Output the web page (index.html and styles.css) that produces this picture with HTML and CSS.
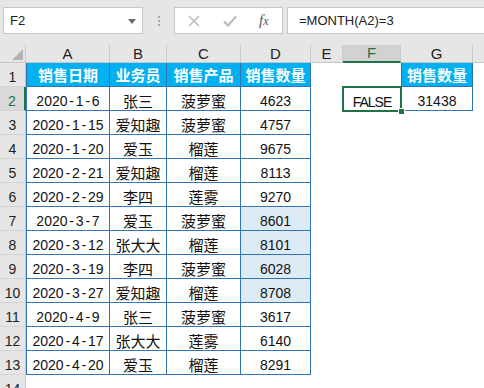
FILE: index.html
```html
<!DOCTYPE html>
<html lang="zh">
<head>
<meta charset="utf-8">
<title>Excel</title>
<link rel="stylesheet" href="styles.css">
</head>
<body>
<div class="toolbar">
  <div class="namebox"><span class="nb-text">F2</span><span class="caret"></span></div>
  <div class="dots"><i></i><i></i><i></i></div>
  <div class="btnbox">
    <svg class="ic-x" width="12" height="12" viewBox="0 0 12 12"><path d="M1 1L11 11M11 1L1 11" stroke="#bcbcbc" stroke-width="1.6" fill="none"/></svg>
    <svg class="ic-ok" width="14" height="12" viewBox="0 0 14 12"><path d="M1 6.5L5 10.5L13 1.5" stroke="#bcbcbc" stroke-width="2.2" fill="none"/></svg>
    <span class="fx">f<span class="fx-x">x</span></span>
  </div>
  <div class="formula">=MONTH(A2)=3</div>
</div>
<div class="sheet">
  <div class="corner"><div class="tri"></div></div>
  <div class="ch">A</div><div class="ch">B</div><div class="ch">C</div><div class="ch">D</div><div class="ch">E</div><div class="ch ch-act">F</div><div class="ch">G</div><div class="ch ch-last"></div>

  <div class="rh">1</div>
  <div class="c t tl hd cjk">销售日期</div><div class="c t hd cjk">业务员</div><div class="c t hd cjk">销售产品</div><div class="c t hd cjk">销售数量</div>
  <div class="c"></div><div class="c"></div><div class="c t tl hd cjk">销售数量</div><div class="c"></div>

  <div class="rh rh-act">2</div>
  <div class="c t tl num">2020<span class="h">-</span>1<span class="h">-</span>6</div><div class="c t cjk">张三</div><div class="c t cjk">菠萝蜜</div><div class="c t num">4623</div>
  <div class="c"></div><div class="c sel num"><span class="false">FALSE</span></div><div class="c t tl num">31438</div><div class="c"></div>

  <div class="rh">3</div>
  <div class="c t tl num">2020<span class="h">-</span>1<span class="h">-</span>15</div><div class="c t cjk">爱知趣</div><div class="c t cjk">菠萝蜜</div><div class="c t num">4757</div>
  <div class="c"></div><div class="c"></div><div class="c"></div><div class="c"></div>

  <div class="rh">4</div>
  <div class="c t tl num">2020<span class="h">-</span>1<span class="h">-</span>20</div><div class="c t cjk">爱玉</div><div class="c t cjk">榴莲</div><div class="c t num">9675</div>
  <div class="c"></div><div class="c"></div><div class="c"></div><div class="c"></div>

  <div class="rh">5</div>
  <div class="c t tl num">2020<span class="h">-</span>2<span class="h">-</span>21</div><div class="c t cjk">爱知趣</div><div class="c t cjk">榴莲</div><div class="c t num">8113</div>
  <div class="c"></div><div class="c"></div><div class="c"></div><div class="c"></div>

  <div class="rh">6</div>
  <div class="c t tl num">2020<span class="h">-</span>2<span class="h">-</span>29</div><div class="c t cjk">李四</div><div class="c t cjk">莲雾</div><div class="c t num">9270</div>
  <div class="c"></div><div class="c"></div><div class="c"></div><div class="c"></div>

  <div class="rh">7</div>
  <div class="c t tl num">2020<span class="h">-</span>3<span class="h">-</span>7</div><div class="c t cjk">爱玉</div><div class="c t cjk">菠萝蜜</div><div class="c t num hl">8601</div>
  <div class="c"></div><div class="c"></div><div class="c"></div><div class="c"></div>

  <div class="rh">8</div>
  <div class="c t tl num">2020<span class="h">-</span>3<span class="h">-</span>12</div><div class="c t cjk">张大大</div><div class="c t cjk">榴莲</div><div class="c t num hl">8101</div>
  <div class="c"></div><div class="c"></div><div class="c"></div><div class="c"></div>

  <div class="rh">9</div>
  <div class="c t tl num">2020<span class="h">-</span>3<span class="h">-</span>19</div><div class="c t cjk">李四</div><div class="c t cjk">菠萝蜜</div><div class="c t num hl">6028</div>
  <div class="c"></div><div class="c"></div><div class="c"></div><div class="c"></div>

  <div class="rh">10</div>
  <div class="c t tl num">2020<span class="h">-</span>3<span class="h">-</span>27</div><div class="c t cjk">爱知趣</div><div class="c t cjk">榴莲</div><div class="c t num hl">8708</div>
  <div class="c"></div><div class="c"></div><div class="c"></div><div class="c"></div>

  <div class="rh">11</div>
  <div class="c t tl num">2020<span class="h">-</span>4<span class="h">-</span>9</div><div class="c t cjk">张三</div><div class="c t cjk">菠萝蜜</div><div class="c t num">3617</div>
  <div class="c"></div><div class="c"></div><div class="c"></div><div class="c"></div>

  <div class="rh">12</div>
  <div class="c t tl num">2020<span class="h">-</span>4<span class="h">-</span>17</div><div class="c t cjk">张大大</div><div class="c t cjk">莲雾</div><div class="c t num">6140</div>
  <div class="c"></div><div class="c"></div><div class="c"></div><div class="c"></div>

  <div class="rh">13</div>
  <div class="c t tl num">2020<span class="h">-</span>4<span class="h">-</span>20</div><div class="c t cjk">爱玉</div><div class="c t cjk">榴莲</div><div class="c t num">8291</div>
  <div class="c"></div><div class="c"></div><div class="c"></div><div class="c"></div>

  <div class="rh">14</div>
  <div class="c"></div><div class="c"></div><div class="c"></div><div class="c"></div>
  <div class="c"></div><div class="c"></div><div class="c"></div><div class="c"></div>
</div>
</body>
</html>
```

FILE: styles.css
```css
html, body {
  margin: 0;
  padding: 0;
  background: #ffffff;
  overflow: hidden;
  width: 484px;
  height: 388px;
}

.toolbar {
  height: 45px;
  background: #e6e6e6;
  display: flex;
  align-items: flex-start;
  padding-top: 7px;
  box-sizing: border-box;
  font-family: "Liberation Sans", Arial, sans-serif;
}

.namebox {
  margin-left: 3px;
  width: 140px;
  height: 27px;
  box-sizing: border-box;
  background: #ffffff;
  border: 1px solid #c6c6c6;
  display: flex;
  align-items: center;
  justify-content: space-between;
  padding: 0 6px 0 6px;
  font-size: 13px;
  color: #222222;
}

.caret {
  width: 0;
  height: 0;
  border-left: 4px solid transparent;
  border-right: 4px solid transparent;
  border-top: 5px solid #6b6b6b;
  margin-top: 1px;
}

.dots {
  width: 31px;
  height: 27px;
  display: flex;
  flex-direction: column;
  align-items: center;
  justify-content: center;
  gap: 2px;
}

.dots i {
  display: block;
  width: 2px;
  height: 2px;
  background: #a9a9a9;
}

.btnbox {
  width: 109px;
  height: 27px;
  box-sizing: border-box;
  background: #ffffff;
  border: 1px solid #c6c6c6;
  display: flex;
  align-items: center;
  padding-left: 13px;
}

.ic-x {
  margin-right: 23px;
}

.ic-ok {
  margin-right: 22px;
}

.fx {
  font-family: "Liberation Serif", "Times New Roman", serif;
  font-style: italic;
  font-size: 15px;
  color: #555555;
  line-height: 1;
}

.fx-x {
  font-size: 12px;
}

.formula {
  margin-left: 4px;
  flex: 1;
  height: 27px;
  box-sizing: border-box;
  background: #ffffff;
  border: 1px solid #c6c6c6;
  border-right: none;
  display: flex;
  align-items: center;
  padding-left: 11px;
  font-size: 13px;
  color: #222222;
}

.sheet {
  display: grid;
  grid-template-columns: 26px 84px 57px 74px 70px 32px 58px 72px 1fr;
  grid-template-rows: 18px;
  grid-auto-rows: 24px;
}

.corner {
  background: #e6e6e6;
  border-right: 1px solid #c6c6c6;
  border-bottom: 1px solid #c6c6c6;
  box-sizing: border-box;
  display: flex;
  align-items: flex-end;
  justify-content: flex-end;
  padding: 0 2px 2px 0;
}

.tri {
  width: 11px;
  height: 11px;
  background: #b4b4b4;
  clip-path: polygon(100% 0, 100% 100%, 0 100%);
}

.ch {
  background: #e6e6e6;
  border-right: 1px solid #c9c9c9;
  border-bottom: 1px solid #c6c6c6;
  box-sizing: border-box;
  display: flex;
  align-items: flex-end;
  justify-content: center;
  font-family: "Liberation Sans", Arial, sans-serif;
  font-size: 15px;
  line-height: 16px;
  color: #222222;
}

.ch-act {
  background: #d2d2d2;
  border-bottom: 2px solid #217346;
  color: #217346;
}

.ch-last {
  border-right: none;
}

.rh {
  background: #e6e6e6;
  border-right: 1px solid #c6c6c6;
  border-bottom: 1px solid #d4d4d4;
  box-sizing: border-box;
  display: flex;
  align-items: flex-end;
  justify-content: center;
  padding-bottom: 1px;
  font-family: "Liberation Sans", Arial, sans-serif;
  font-size: 14px;
  line-height: 16px;
  color: #222222;
}

.rh-act {
  background: #d9d9d9;
  border-right: 2px solid #217346;
  color: #217346;
}

.c {
  box-sizing: border-box;
  display: flex;
  align-items: flex-end;
  justify-content: center;
  padding-bottom: 1px;
  line-height: 16px;
  white-space: nowrap;
  color: #111111;
  background: #ffffff;
}

.num {
  font-family: "Liberation Sans", Arial, sans-serif;
  font-size: 14px;
}

.cjk {
  font-family: "Noto Sans CJK SC", "Liberation Sans", sans-serif;
  font-size: 15px;
}

.h {
  padding: 0 1.8px;
}

.t {
  border-right: 1px solid #2f75b5;
  border-bottom: 1px solid #2f75b5;
}

.tl {
  border-left: 1px solid #2f75b5;
}

.hd {
  background: #00b0f0;
  color: #ffffff;
  font-weight: 700;
  align-items: center;
  padding-bottom: 0;
}

.hl {
  background: #ddebf7;
}

.sel {
  position: relative;
  outline: 2px solid #217346;
  outline-offset: -1px;
  z-index: 1;
}

.sel::after {
  content: "";
  position: absolute;
  right: -4px;
  bottom: -4px;
  width: 5px;
  height: 5px;
  background: #217346;
  border: 1px solid #ffffff;
}

.false {
  letter-spacing: -1px;
}
```
